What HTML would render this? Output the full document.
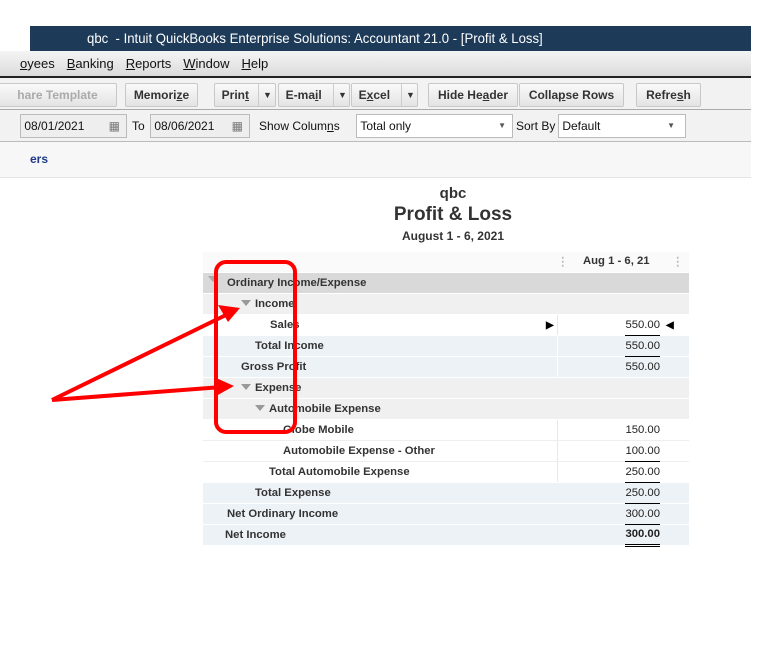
<!DOCTYPE html>
<html><head><style>
body{margin:0;width:784px;height:670px;background:#fff;font-family:"Liberation Sans",Arial,sans-serif;position:relative;overflow:hidden}
.a{position:absolute}
.title{left:30px;top:26px;width:721px;height:25px;background:#1d3a58;color:#fff;font-size:14px;line-height:25px}
.menu{left:0;top:51px;width:751px;height:25px;background:linear-gradient(#f4f4f4,#dcdcdc);border-bottom:2px solid #222;font-size:13px;line-height:26px;color:#111}
.menu span{margin-right:12px}
.tb{left:0;top:78px;width:751px;height:31px;background:#f2f2f2;border-bottom:1px solid #aaa}
.btn{position:absolute;top:5px;height:22px;border:1px solid #c8c8c8;background:linear-gradient(#fafafa,#e4e4e4);font-size:12px;font-weight:bold;color:#333;line-height:22px;text-align:center;border-radius:2px}
.fl{left:0;top:110px;width:751px;height:31px;background:#f2f2f2;border-bottom:1px solid #bbb;font-size:12px;color:#111}
.inp{position:absolute;top:4px;height:22px;border:1px solid #bbb;background:#eee;line-height:22px;font-size:12px}
.r{position:absolute;left:203px;width:486px;height:20px;font-size:11.3px;font-weight:bold;color:#333;line-height:21px}
.r .l{position:absolute}
.r .v{position:absolute;right:29px;font-weight:normal;color:#222}
.tri{display:inline-block;width:0;height:0;border-left:5px solid transparent;border-right:5px solid transparent;border-top:6px solid #999;margin-right:4px;vertical-align:1px}
.div{position:absolute;left:354px;top:0;width:1px;height:20px;background:#e8e8e8}
</style></head><body>
<div class="a title"><span style="position:absolute;left:57px;transform:scaleX(0.94);transform-origin:0 0;white-space:nowrap">qbc &nbsp;- Intuit QuickBooks Enterprise Solutions: Accountant 21.0 - [Profit &amp; Loss]</span></div>
<div class="a menu"><span style="margin-left:20px"><u>o</u>yees</span><span><u>B</u>anking</span><span><u>R</u>eports</span><span><u>W</u>indow</span><span><u>H</u>elp</span></div>
<div class="a tb">
<div class="btn" style="left:-2px;width:117px;color:#aaa">hare Template</div>
<div class="btn" style="left:125px;width:71px">Memori<u>z</u>e</div>
<div class="btn" style="left:214px;width:60px;text-align:left">&nbsp;&nbsp;Prin<u>t</u> <span style="position:absolute;left:43px;border-left:1px solid #ccc;padding-left:4px;font-size:9px">▼</span></div>
<div class="btn" style="left:278px;width:70px;text-align:left">&nbsp;&nbsp;E-ma<u>i</u>l <span style="position:absolute;left:54px;border-left:1px solid #ccc;padding-left:4px;font-size:9px">▼</span></div>
<div class="btn" style="left:351px;width:65px;text-align:left">&nbsp;&nbsp;E<u>x</u>cel <span style="position:absolute;left:49px;border-left:1px solid #ccc;padding-left:4px;font-size:9px">▼</span></div>
<div class="btn" style="left:428px;width:88px">Hide He<u>a</u>der</div>
<div class="btn" style="left:519px;width:103px">Colla<u>p</u>se Rows</div>
<div class="btn" style="left:636px;width:63px">Refre<u>s</u>h</div>
</div>
<div class="a fl">
<div class="inp" style="left:20px;width:105px">&nbsp;08/01/2021<span style="position:absolute;right:6px;color:#777">▦</span></div>
<span class="a" style="left:132px;top:9px">To</span>
<div class="inp" style="left:150px;width:98px">&nbsp;08/06/2021<span style="position:absolute;right:6px;color:#777">▦</span></div>
<span class="a" style="left:259px;top:9px">Show Colum<u>n</u>s</span>
<div class="inp" style="left:356px;width:155px;background:#fff">&nbsp;Total only<span style="position:absolute;right:6px;font-size:8px;color:#555">▼</span></div>
<span class="a" style="left:516px;top:9px">Sort By</span>
<div class="inp" style="left:558px;width:126px;background:#fff">&nbsp;Default<span style="position:absolute;right:10px;font-size:8px;color:#555">▼</span></div>
</div>
<div class="a" style="left:0;top:142px;width:751px;height:35px;background:#f7f7f7;border-bottom:1px solid #e4e4e4"><span class="a" style="left:30px;top:10px;font-size:12px;font-weight:bold;color:#1f3a8a">ers</span></div>
<div class="a" style="left:0;top:185px;width:906px;text-align:center;font-weight:bold;color:#333">
<div style="font-size:15px;line-height:17px">qbc</div>
<div style="font-size:19px;line-height:25px">Profit &amp; Loss</div>
<div style="font-size:12px;line-height:18px">August 1 - 6, 2021</div></div>
<div class="r" style="top:252px;background:#fafafa"><span class="l" style="left:380px;top:-1px">Aug 1 - 6, 21</span><span class="a" style="left:354px;color:#bbb">⋮</span><span class="a" style="left:469px;color:#bbb">⋮</span></div>
<div class="r" style="top:273px;background:#d9d9d9"><span class="l" style="left:5px;top:-3px"><span class="tri" style="border-top-color:#aaa"></span></span><span class="l" style="left:24px">Ordinary Income/Expense</span></div>
<div class="r" style="top:294px;background:#f0f0f0"><span class="l" style="left:38px"><span class="tri"></span>Income</span></div>
<div class="r" style="top:315px;background:#fff"><span class="l" style="left:67px">Sales</span><span class="a" style="left:343px;font-size:10px;color:#000">▶</span><div class="div"></div><span class="v" style="border-bottom:1px solid #000;line-height:20px">550.00</span><span class="a" style="left:463px;font-size:10px;color:#000">◀</span></div>
<div class="r" style="top:336px;background:#edf2f7"><span class="l" style="left:52px">Total Income</span><div class="div" style="background:#fff"></div><span class="v" style="border-bottom:1px solid #000;line-height:20px">550.00</span></div>
<div class="r" style="top:357px;background:#edf2f7"><span class="l" style="left:38px">Gross Profit</span><div class="div" style="background:#fff"></div><span class="v">550.00</span></div>
<div class="r" style="top:378px;background:#f0f0f0"><span class="l" style="left:38px"><span class="tri"></span>Expense</span></div>
<div class="r" style="top:399px;background:#f0f0f0"><span class="l" style="left:52px"><span class="tri"></span>Automobile Expense</span></div>
<div class="r" style="top:420px;background:#fff;border-bottom:1px solid #eee"><span class="l" style="left:80px">Globe Mobile</span><div class="div"></div><span class="v">150.00</span></div>
<div class="r" style="top:441px;background:#fff;border-bottom:1px solid #eee"><span class="l" style="left:80px">Automobile Expense - Other</span><div class="div"></div><span class="v" style="border-bottom:1px solid #000;line-height:20px">100.00</span></div>
<div class="r" style="top:462px;background:#fff"><span class="l" style="left:66px">Total Automobile Expense</span><div class="div"></div><span class="v" style="border-bottom:1px solid #000;line-height:20px">250.00</span></div>
<div class="r" style="top:483px;background:#edf2f7"><span class="l" style="left:52px">Total Expense</span><span class="v" style="border-bottom:1px solid #000;line-height:20px">250.00</span></div>
<div class="r" style="top:504px;background:#edf2f7"><span class="l" style="left:24px">Net Ordinary Income</span><span class="v" style="border-bottom:1px solid #000;line-height:20px">300.00</span></div>
<div class="r" style="top:525px;background:#edf2f7"><span class="l" style="left:22px">Net Income</span><span class="v" style="font-weight:bold;border-bottom:3px double #000;line-height:19px">300.00</span></div>
<svg class="a" style="left:0;top:0" width="784" height="670">
<rect x="216" y="262" width="79" height="170" rx="10" fill="none" stroke="#f00" stroke-width="4"/>
<line x1="52" y1="400" x2="230" y2="313" stroke="#f00" stroke-width="4"/>
<polygon points="240,308 218,305 228,322" fill="#f00"/>
<line x1="52" y1="400" x2="222" y2="387" stroke="#f00" stroke-width="4"/>
<polygon points="234,386 214,377 216,396" fill="#f00"/>
</svg>
</body></html>
